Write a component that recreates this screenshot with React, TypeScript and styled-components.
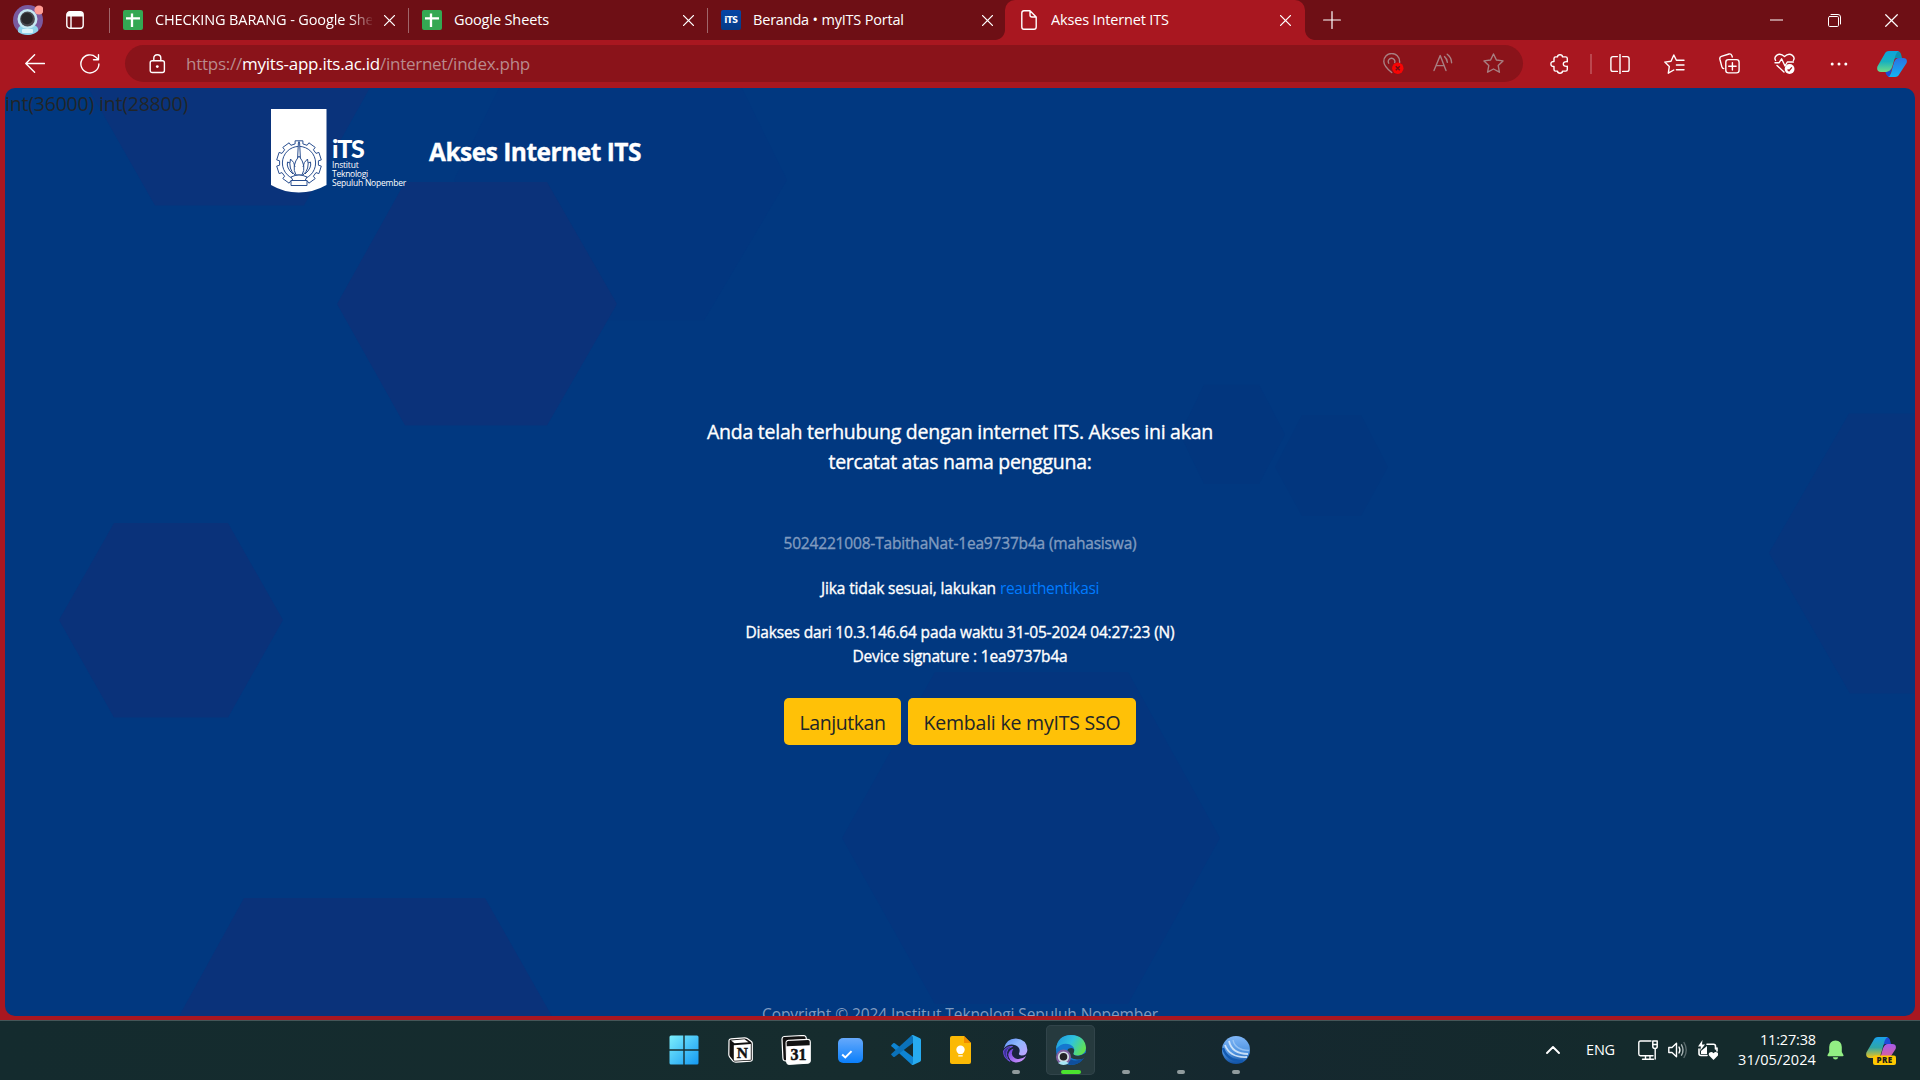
import React from "react";
import styled, { createGlobalStyle, css } from "styled-components";

const Global = createGlobalStyle`
  *, *::before, *::after { box-sizing: border-box; }
  html, body { margin: 0; padding: 0; background: #a91720; overflow: hidden; }
  body { font-family: "Open Sans", "Noto Sans", sans-serif; }
  svg { display: block; flex: none; }
`;

const Screen = styled.div`
  display: flex;
  flex-direction: column;
  width: 1920px;
  height: 1080px;
  background: #a91720;
  overflow: hidden;
`;

const Label = styled.span<{ $size?: number; $ls?: number; $color?: string; $weight?: number; $medium?: boolean }>`
  font-size: ${(p) => p.$size ?? 15}px;
  letter-spacing: ${(p) => p.$ls ?? 0}px;
  color: ${(p) => p.$color ?? "#fff"};
  font-weight: ${(p) => p.$weight ?? 400};
  white-space: nowrap;
  ${(p) => p.$medium && "-webkit-text-stroke: 0.35px currentColor;"}
`;

/* ---------- tab strip ---------- */
const TabStrip = styled.div`
  display: flex;
  height: 40px;
  flex: none;
  background: #6e0f15;
`;
const StripStart = styled.div`
  display: flex;
  align-items: center;
  gap: 23px;
  width: 109px;
  padding-left: 13px;
`;
const TabBox = styled.div<{ $active?: boolean }>`
  position: relative;
  display: flex;
  align-items: center;
  width: ${(p) => (p.$active ? 300 : 299)}px;
  height: 40px;
  padding: 0 ${(p) => (p.$active ? 14 : 13)}px 0 0;
  ${(p) =>
    p.$active
      ? css`
          margin-left: -1px;
          background: #a91720;
          border-radius: 10px 10px 0 0;
          &::before,
          &::after {
            content: "";
            position: absolute;
            bottom: 0;
            width: 10px;
            height: 10px;
          }
          &::before {
            left: -10px;
            background: radial-gradient(circle at 0 0, transparent 9.5px, #a91720 10.3px);
          }
          &::after {
            right: -10px;
            background: radial-gradient(circle at 100% 0, transparent 9.5px, #a91720 10.3px);
          }
        `
      : ""}
`;
const TabRule = styled.i<{ $hidden?: boolean }>`
  width: 1px;
  height: 25px;
  margin-right: 13px;
  background: ${(p) => (p.$hidden ? "transparent" : "#a0666a")};
`;
const TabTitle = styled.div<{ $fade?: boolean }>`
  flex: 1;
  height: 22px;
  line-height: 20px;
  margin: 0 12px;
  overflow: hidden;
  white-space: nowrap;
  ${(p) => p.$fade && "mask-image: linear-gradient(to right, #000 195px, transparent 219px);"}
`;
const NewTab = styled.div`
  display: flex;
  align-items: center;
  padding-left: 18px;
  flex: 1;
`;
const WindowButtons = styled.div`
  display: flex;
  align-items: center;
  gap: 44.5px;
  padding-right: 22px;
`;

/* ---------- toolbar ---------- */
const Toolbar = styled.div`
  display: flex;
  align-items: center;
  flex: none;
  height: 48px;
  padding: 0 12px 1px 25px;
`;
const NavButtons = styled.div`
  display: flex;
  gap: 35px;
  width: 100px;
`;
const AddressBar = styled.div`
  display: flex;
  align-items: center;
  width: 1398px;
  height: 37px;
  padding: 0 19px 0 24px;
  border-radius: 19px;
  background: #8a131a;
`;
const Url = styled.div`
  flex: 1;
  display: flex;
  align-items: center;
  line-height: 24px;
  margin-left: 20px;
`;
const AddressActions = styled.div`
  display: flex;
  gap: 29px;
`;
const ToolbarActions = styled.div`
  display: flex;
  align-items: center;
  flex: 1;
  gap: 34px;
  padding-left: 27px;
  & > svg:last-child {
    margin-left: -6px;
  }
`;
const ToolRule = styled.i`
  flex: none;
  width: 2px;
  height: 20px;
  margin: 0 -16px 0 -13px;
  background: #bb474e;
`;

/* ---------- page ---------- */
const Viewport = styled.main`
  position: relative;
  display: flex;
  flex-direction: column;
  flex: none;
  width: 1910px;
  height: 928px;
  margin: 0 5px 4px;
  border-radius: 10px;
  background: #013880;
  overflow: hidden;
`;
const Backdrop = styled.svg`
  position: absolute;
  inset: 0;
`;
const DebugLine = styled.div`
  position: relative;
  height: 21px;
  line-height: 32px;
`;
const SiteHeader = styled.header`
  position: relative;
  display: flex;
  height: 84px;
  padding-left: 266px;
`;
const LogoWords = styled.div`
  display: flex;
  flex-direction: column;
  width: 98px;
  padding: 25px 0 0 5px;
`;
const LogoMark = styled.div`
  height: 23px;
  line-height: 28px;
  font-family: Lato, sans-serif;
`;
const LogoLine = styled.div`
  height: 9px;
  line-height: 10px;
`;
const SiteTitle = styled.h1`
  margin: 20px 0 0 4px;
  line-height: 40px;
  font-weight: 700;
`;
const Content = styled.section`
  position: relative;
  display: flex;
  flex-direction: column;
  align-items: center;
  padding-top: 224px;
  text-align: center;
`;
const Lead = styled.p`
  display: flex;
  flex-direction: column;
  align-items: center;
  margin: 0 0 54px;
  line-height: 30px;
`;
const Para = styled.p<{ $gap: number }>`
  display: flex;
  flex-direction: column;
  align-items: center;
  margin: 0 0 ${(p) => p.$gap}px;
  line-height: 24px;
`;
const Inline = styled.span`
  display: flex;
  gap: 4px;
`;
const ButtonRow = styled.div`
  display: flex;
  gap: 7px;
`;
const Button = styled.button<{ $w: number }>`
  display: flex;
  align-items: center;
  justify-content: center;
  width: ${(p) => p.$w}px;
  height: 47px;
  padding: 2px 0 0;
  border: 0;
  border-radius: 5px;
  background: #ffc107;
  font-family: inherit;
`;
const Footer = styled.footer`
  position: relative;
  margin-top: 257px;
  line-height: 25px;
  text-align: center;
`;

/* ---------- taskbar ---------- */
const Taskbar = styled.footer`
  display: flex;
  flex: none;
  height: 60px;
  padding-left: 656px;
  border-top: 1px solid #465658;
  background: linear-gradient(to right, #142b2e, #162c2e 45%, #15282f 65%, #142a2c 85%, #142a2c);
`;
const Slot = styled.div<{ $active?: boolean }>`
  position: relative;
  display: flex;
  align-items: center;
  justify-content: center;
  width: 49px;
  height: 50px;
  margin: 4px 3px 0;
  border-radius: 5px;
  ${(p) => p.$active && "background: #263a3e; box-shadow: inset 0 0 0 1px #31444a;"}
  &:first-child {
    margin-right: 5px;
  }
`;
const Indicator = styled.i<{ $active?: boolean }>`
  position: absolute;
  bottom: 1px;
  left: 50%;
  transform: translateX(-50%);
  width: ${(p) => (p.$active ? 20 : 8)}px;
  height: 4px;
  border-radius: 2px;
  background: ${(p) => (p.$active ? "#4be32f" : "#909b9d")};
`;
const Tray = styled.div`
  display: flex;
  align-items: center;
  justify-content: flex-end;
  flex: 1;
  padding: 0 24px 2px 0;
`;
const TrayIcons = styled.div`
  display: flex;
  gap: 10px;
  margin: 0 20px 0 23px;
`;
const Language = styled.div`
  width: 29px;
  margin-left: 26px;
  line-height: 20px;
`;
const Clock = styled.div`
  display: flex;
  flex-direction: column;
  align-items: flex-end;
  width: 78px;
  margin-right: 11px;
  line-height: 20px;
`;
const PreviewButton = styled.div`
  margin-left: 22px;
`;

/* ---------- icons ---------- */
const stroke = { fill: "none", stroke: "#fff", strokeWidth: 1.4, strokeLinecap: "round", strokeLinejoin: "round" } as const;

const Astronaut = ({ size = 30 }: { size?: number }) => (
  <svg width={size} height={size} viewBox="0 0 30 30">
    <circle cx="15" cy="15" r="15" fill="#7a5a9f" />
    <path d="M5 27 Q4 21 10 20 H20 Q26 21 25 26 Q20 30 15 30 Q9 30 5 27Z" fill="#8fd3ea" />
    <circle cx="14.5" cy="14" r="10" fill="#c5e8f2" />
    <circle cx="14.5" cy="14" r="7.4" fill="#4a4a50" />
    <circle cx="14" cy="13.5" r="5.8" fill="#29292c" />
    <rect x="9" y="24" width="11" height="4" rx="1" fill="#d9f3fa" />
    <circle cx="26" cy="5" r="4.6" fill="#ff9c94" />
  </svg>
);
const TabActions = () => (
  <svg width="18" height="18" viewBox="0 0 18 18">
    <rect x="0.8" y="0.8" width="16.4" height="16.4" rx="3" {...stroke} />
    <path d="M1 3.5 Q1 1 3.5 1 H14.5 Q17 1 17 3.5 V5.5 H1Z" fill="#fff" />
    <path d="M5 5V17" {...stroke} />
  </svg>
);
const SheetsIcon = () => (
  <svg width="20" height="20" viewBox="0 0 20 20">
    <rect width="20" height="20" rx="2" fill="#34a853" />
    <path d="M9 3.5V17M3 8.3H17" fill="none" stroke="#fff" strokeWidth="2.3" />
  </svg>
);
const ItsFavicon = styled.div`
  width: 20px;
  height: 20px;
  border-radius: 2px;
  background: linear-gradient(#0746a6, #053a86);
  color: #fff;
  font: 800 10px/19px "Lato", sans-serif;
  text-align: center;
  letter-spacing: -0.4px;
`;
const FileIcon = () => (
  <svg width="20" height="20" viewBox="0 0 20 20">
    <path d="M4.5 .8H11L17.2 7V17Q17.2 19.2 15 19.2H4.9Q2.8 19.2 2.8 17V3Q2.8 .8 5 .8ZM11 .8V5Q11 7 13 7H17" {...stroke} />
  </svg>
);
const CloseX = ({ size = 11, w = 1.3 }: { size?: number; w?: number }) => (
  <svg width={size} height={size} viewBox="0 0 11 11">
    <path d="M.6 .6L10.4 10.4M10.4 .6L.6 10.4" {...stroke} strokeWidth={w} />
  </svg>
);
const PlusIcon = () => (
  <svg width="18" height="18" viewBox="0 0 18 18">
    <path d="M9 .6V17.4M.6 9H17.4" {...stroke} strokeWidth="1.2" />
  </svg>
);
const MinimizeIcon = () => (
  <svg width="13" height="13" viewBox="0 0 13 13">
    <path d="M0 6H13" stroke="#fff" strokeWidth="1" />
  </svg>
);
const RestoreIcon = () => (
  <svg width="13" height="13" viewBox="0 0 13 13">
    <rect x=".5" y="2.5" width="10" height="10" rx="1.2" {...stroke} strokeWidth="1" />
    <path d="M3 .5H10Q12.5 .5 12.5 3V10" {...stroke} strokeWidth="1" />
  </svg>
);
const BackIcon = () => (
  <svg width="20" height="20" viewBox="0 0 20 20">
    <path d="M19.4 9.500H.8M9.600 .8L.8 9.500L9.600 18.200" {...stroke} />
  </svg>
);
const RefreshIcon = () => (
  <svg width="20" height="20" viewBox="0 0 20 20">
    <path d="M18.9 10A9 9 0 1 1 15.9 3.2L18.4 5.6M18.5 .8V5.8H13.5" {...stroke} />
  </svg>
);
const LockIcon = () => (
  <svg width="17" height="20" viewBox="0 0 17 20">
    <rect x="1.2" y="6.7" width="14.2" height="11.8" rx="2" {...stroke} />
    <path d="M4.8 6.5V4.2Q4.8 .8 8.3 .8Q11.8 .8 11.8 4.2V6.5" {...stroke} />
    <circle cx="8.3" cy="12.6" r="1.4" fill="#fff" />
  </svg>
);
const dim = { ...stroke, stroke: "#a87f82" };
const LocationBlocked = () => (
  <svg width="21" height="21" viewBox="0 0 21 21">
    <path d="M8.700 19.500Q.8 13 .8 8.400A7.900 7.900 0 0 1 16.600 8.400V9.500M5.700 10.200A3.300 3.300 0 1 1 11.700 9.600" {...dim} />
    <circle cx="14.8" cy="15.3" r="5.7" fill="#f80404" />
    <path d="M12.8 13.3L16.8 17.3M16.8 13.3L12.8 17.3" stroke="#6d0f14" strokeWidth="1.4" />
  </svg>
);
const ReadAloud = () => (
  <svg width="21" height="20" viewBox="0 0 21 20">
    <path d="M1 17.500L7.200 2.600L13 17.500M3 12.600H11.200M11.500 3.600Q14 5.600 14.400 9.400M14.200 1.200Q18.500 4.400 18.600 9.800" {...dim} />
  </svg>
);
const starPath = "M10.5 1L13.4 7L20 7.9L15.2 12.5L16.4 19.2L10.5 16L4.6 19.2L5.8 12.5L1 7.9L7.6 7Z";
const StarIcon = () => (
  <svg width="21" height="20" viewBox="0 0 21 20">
    <path d={starPath} {...dim} />
  </svg>
);
const PuzzleIcon = () => (
  <svg width="19" height="20" viewBox="0 0 19 20">
    <path d="M5.600 2.900H7.500Q7.600 .8 10 .8Q12.400 .8 12.500 2.900H15.600Q17.300 2.900 17.300 4.600V7.700Q13.300 7.200 13.300 10Q13.300 12.800 17.300 12.300V15.400Q17.300 17.100 15.600 17.100H12.500Q12.400 19.200 10 19.200Q7.600 19.200 7.500 17.100H5.600Q4 17.100 4 15.400V12.500Q.9 12.600 .9 10Q.9 7.400 4 7.500V4.600Q4 2.900 5.600 2.900" {...stroke} />
  </svg>
);
const SplitIcon = () => (
  <svg width="20" height="20" viewBox="0 0 20 20">
    <path d="M7.4 2.6H3Q.9 2.6 .9 4.8V15.2Q.9 17.4 3 17.4H7.4M12.6 2.6H17Q19.1 2.6 19.1 4.8V15.2Q19.1 17.4 17 17.4H12.6M10 .5V19.5" {...stroke} />
  </svg>
);
const FavoritesIcon = () => (
  <svg width="21" height="20" viewBox="0 0 21 20">
    <path d="M9.800 16L4.300 19.200L5.300 12.600L.8 8.100L7 7.200L9.800 1L12.400 6.200H20M12.400 11H20M12.400 15.800H20" {...stroke} />
  </svg>
);
const CollectionsIcon = () => (
  <svg width="21" height="21" viewBox="0 0 21 21">
    <path d="M4.8 15.6Q3.3 15.6 2.9 13.9L.9 6.2Q.4 4 2.4 3.4L10 1Q12 .5 12.8 2.4L13.3 4" {...stroke} />
    <rect x="6.8" y="6.6" width="13.3" height="13.3" rx="2.6" {...stroke} />
    <path d="M13.4 9.6V17M9.7 13.3H17.1" {...stroke} />
  </svg>
);
const HeartPulse = () => (
  <svg width="21" height="21" viewBox="0 0 21 21">
    <path d="M1.6 7.500Q-.2 4.6 2.6 2.4Q6.4 -.4 10.5 3.6Q14.6 -.4 18.4 2.4Q21.2 4.6 19.4 7.500M3 12.4L10 19" {...stroke} />
    <path d="M1 9.800H5L7.6 5.800L11 13L13.3 9H19.4" {...stroke} />
    <circle cx="15.6" cy="16" r="4.9" fill="#fff" />
    <path d="M13.6 16.4L15 17.7L17.9 14.4" fill="none" stroke="#a91720" strokeWidth="1.3" />
  </svg>
);
const DotsIcon = () => (
  <svg width="20" height="20" viewBox="0 0 20 20">
    {[3.2, 10, 16.8].map((x) => (
      <circle key={x} cx={x} cy="10" r="1.5" fill="#fff" />
    ))}
  </svg>
);
const CopilotIcon = ({ pre }: { pre?: boolean }) => {
  const id = pre ? "p" : "t";
  return (
    <svg width="30" height="30" viewBox="0 0 30 30">
      <defs>
        <linearGradient id={id + "a"} x1="0" y1="0" x2="0" y2="1">
          <stop offset="0" stopColor={pre ? "#19a0ea" : "#0ea4dc"} />
          <stop offset=".5" stopColor={pre ? "#2fa6a8" : "#18b1bf"} />
          <stop offset="1" stopColor={pre ? "#f4c518" : "#6fdc86"} />
        </linearGradient>
        <linearGradient id={id + "b"} x1="0" y1="0" x2="0" y2="1">
          <stop offset="0" stopColor={pre ? "#a65bea" : "#2a72e4"} />
          <stop offset="1" stopColor={pre ? "#f0617c" : "#12b4f4"} />
        </linearGradient>
      </defs>
      <path d="M17 2H20Q23 2 24 5L25 9H20Q17 9 16 12L14 18Z" fill={pre ? "#1e4bd8" : "#0c8fb0"} />
      <path d="M7.6 5Q8.8 2 12 2H22Q19.5 3 18.6 6L15.2 18Q13.8 23 9.6 23H4Q-.8 23 .4 17.6Z" fill={`url(#${id}a)`} />
      <path d="M9 23Q13.6 22.6 15 18L12.6 28Q9.4 27.4 8.4 23Z" fill={pre ? "#f29a40" : "#1a4fd6"} />
      <path d="M22.4 25Q21.2 28 18 28H11Q13 27 14 24L16.8 14Q18.4 9 22 9H26Q31 9 29.6 14Z" fill={`url(#${id}b)`} />
      {pre && (
        <>
          <rect x="7" y="20.5" width="23" height="9.5" rx="2" fill="#ffc800" />
          <text x="18.5" y="28.2" textAnchor="middle" fontFamily="Open Sans" fontWeight="800" fontSize="8" letterSpacing=".3" fill="#1c1c1c">
            PRE
          </text>
        </>
      )}
    </svg>
  );
};

const gear = (() => {
  const pts: string[] = [];
  for (let i = 0; i < 10; i++) {
    const base = (i * 36 - 90) * (Math.PI / 180);
    [
      [-10, 22.5],
      [10, 22.5],
      [11.5, 19.5],
      [24.5, 19.5],
    ].forEach(([a, r]) => {
      const t = base + (a * Math.PI) / 180;
      pts.push(`${(28 + r * Math.cos(t)).toFixed(1)},${(54 + r * Math.sin(t)).toFixed(1)}`);
    });
  }
  return pts.join(" ");
})();
const Banner = () => (
  <svg width="56" height="84" viewBox="0 0 56 84">
    <path d="M0 0H55.5V76Q42 83.6 27.8 83.6Q13 83.6 0 76Z" fill="#fff" />
    <g fill="none" stroke="#2a4f90" strokeWidth="1">
      <polygon points={gear} strokeLinejoin="round" />
      <circle cx="28" cy="54" r="16.6" />
      <path d="M26.6 49L27.4 34Q28 31 28.6 34L29.4 49" fill="#fff" />
      <path d="M28 47Q20 57 25 66H31Q36 57 28 47Z" fill="#fff" />
      <path d="M24 66Q17 60 19.5 50Q23.5 53 24 58M32 66Q39 60 36.5 50Q32.5 53 32 58M22 65Q15 59 16.5 53L19 54M34 65Q41 59 39.5 53L37 54" />
      <path d="M20 68Q28 64 36 68L34 71.5H36V76.5H20V71.5H22Z" fill="#fff" />
      <path d="M21 71.5H35" />
    </g>
  </svg>
);

const WindowsIcon = () => (
  <svg width="30" height="30" viewBox="0 0 30 30">
    <defs>
      <linearGradient id="win" x1="0" y1="0" x2="1" y2="1">
        <stop offset="0" stopColor="#7ceffd" />
        <stop offset="1" stopColor="#1499f2" />
      </linearGradient>
    </defs>
    <path d="M2 .5H14.3V14.3H.5V2Q.5 .5 2 .5ZM15.7 .5H28Q29.5 .5 29.5 2V14.3H15.7ZM.5 15.7H14.3V29.5H2Q.5 29.5 .5 28ZM15.7 15.7H29.5V28Q29.5 29.5 28 29.5H15.7Z" fill="url(#win)" />
  </svg>
);
const NotionIcon = () => (
  <svg width="25" height="26" viewBox="0 0 25 26">
    <path d="M1 3.5Q1 2 3 1.8L16.5 .8Q18 .7 19.2 1.5L23.3 4.5Q24.3 5.3 24.3 6.5V22.5Q24.3 24 22.6 24.2L8 25.2Q6 25.3 5 24L1.6 19.8Q.8 18.8 .8 17.6Z" fill="#111" stroke="#fff" strokeWidth="1.2" />
    <path d="M5.8 8.2L22.8 7V22.7L7 23.7Q5.8 23.7 5.8 22.4Z" fill="#fff" />
    <path d="M3 3.4L16.5 2.3L20.5 5.2L6.5 6.2Z" fill="#fff" />
    <text x="14.3" y="20.5" textAnchor="middle" fontFamily="Liberation Serif" fontWeight="700" fontSize="15.5" fill="#111" stroke="#111" strokeWidth=".4">
      N
    </text>
  </svg>
);
const CalendarIcon = () => (
  <svg width="30" height="30" viewBox="0 0 30 30">
    <path d="M1 4Q1 1.8 3 1.5L22 .5Q24 .5 25 2L25.5 5L5 26L3 25.5Q2 25 1.9 23Z" fill="#111" stroke="#fff" strokeWidth="1.2" />
    <path d="M5 7.5Q5 5.5 7 5.3L27 4.3Q29.3 4.3 29.3 6.5V26Q29.3 28 27.3 28.2L8 29.4Q5.7 29.4 5.6 27.2Z" fill="#fff" stroke="#fff" />
    <path d="M5.6 7.5Q5.6 6 7.2 5.9L27 4.9Q28.7 4.9 28.7 6.5V10.2L5.7 11.2Z" fill="#111" />
    <text x="17.4" y="25.3" textAnchor="middle" fontFamily="Liberation Serif" fontWeight="700" fontSize="16" fill="#111" stroke="#111" strokeWidth=".5">
      31
    </text>
  </svg>
);
const TodoIcon = () => (
  <svg width="25" height="25" viewBox="0 0 24 25" preserveAspectRatio="none">
    <defs>
      <linearGradient id="todo" x1="0" y1="0" x2="0" y2="1">
        <stop offset="0" stopColor="#66a9fb" />
        <stop offset="1" stopColor="#0a7ffb" />
      </linearGradient>
    </defs>
    <rect width="24" height="25" rx="5" fill="url(#todo)" />
    <path d="M4 16.5L7 19.5L13 13.2" fill="none" stroke="#fff" strokeWidth="1.9" />
  </svg>
);
const CodeIcon = () => (
  <svg width="30" height="30" viewBox="0 0 30 30">
    <path d="M22 22L3.8 8.3Q3 7.7 2.2 8.3L.5 9.9Q-.2 10.6 .5 11.3L20.5 29.5L22 30Z" fill="#0e84d2" />
    <path d="M22 8L3.8 21.7Q3 22.3 2.2 21.7L.5 20.1Q-.2 19.4 .5 18.7L20.5 .5L22 0Z" fill="#0b72ba" />
    <path d="M20.500 .6L22 0L29 3.3Q30 3.8 30 5V25Q30 26.2 29 26.7L22 30L20.500 29.400Q22 29 22 27.500V2.500Q22 1 20.500 .6Z" fill="#27abf0" />
  </svg>
);
const KeepIcon = () => (
  <svg width="21" height="28" viewBox="0 0 21 28">
    <path d="M2 0H14L21 7V26Q21 28 19 28H2Q0 28 0 26V2Q0 0 2 0Z" fill="#fbb905" />
    <path d="M14 0L21 7H14Z" fill="#f08c00" />
    <circle cx="10.5" cy="13.7" r="4.2" fill="#fff" />
    <path d="M8.3 16H12.7V17.800H8.3ZM8.3 19.3H12.7V20.6H8.3Z" fill="#fff" />
  </svg>
);
const SwirlIcon = () => (
  <svg width="25" height="25" viewBox="0 0 25 25">
    <defs>
      <linearGradient id="swa" x1="0" y1="0" x2="1" y2=".8">
        <stop offset="0" stopColor="#5b8cf5" />
        <stop offset=".5" stopColor="#8fb8ff" />
        <stop offset="1" stopColor="#b9a4ff" />
      </linearGradient>
      <linearGradient id="swb" x1="0" y1="0" x2="1" y2="1">
        <stop offset="0" stopColor="#6a3be0" />
        <stop offset="1" stopColor="#d9a0ff" />
      </linearGradient>
    </defs>
    <circle cx="12.5" cy="12.5" r="12.1" fill="#1a2440" />
    <path d="M.8 10.500Q3.500 .6 12.500 .5Q24 1 24.400 12Q24 17.500 18.500 17.500Q15 17.300 16.200 15Q18 9.500 12.500 7.200Q5.500 5 .8 10.500Z" fill="url(#swa)" />
    <path d="M10.500 10.800Q6.500 17 12 20.300Q17.500 22.500 23.200 18Q19.500 24.800 12.500 24.500Q5.500 23 5.200 16.500Q6 12 10.500 10.800Z" fill="url(#swb)" />
    <path d="M9.500 8.500Q2.800 10.500 3.600 17.500Q4.200 21 7 23.400Q.3 20 .5 13Q3.500 8 9.500 8.500Z" fill="#3b2f9c" stroke="#7a55ee" strokeWidth=".8" />
  </svg>
);
const EdgeIcon = () => (
  <svg width="30" height="30" viewBox="0 0 30 30">
    <defs>
      <linearGradient id="eda" x1="0" y1=".2" x2="1" y2=".6">
        <stop offset="0" stopColor="#1f9be0" />
        <stop offset=".5" stopColor="#2fc3dc" />
        <stop offset="1" stopColor="#63e34c" />
      </linearGradient>
    </defs>
    <circle cx="15" cy="15" r="15" fill="#1576cf" />
    <path d="M11 15Q10 21 15 24.5Q21 27.5 28.5 22Q24 30 15 30Q8 29 7.5 21Q8 16 11 15Z" fill="#0f4f9c" />
    <path d="M12 14Q17 11.5 18.3 15Q18.6 16.5 17.5 18.5Q17.5 20.5 22 20.7Q26 20.5 31 17L29.500 22Q26 25 21 24.5Q12 24 11 17Z" fill="#263a3e" />
    <path d="M0 14Q1.5 0 15 0Q29 .5 30 13Q29.5 20 22 20.5Q16 20.5 18 17Q19.5 12 14 9.5Q6 7 0 14Z" fill="url(#eda)" />
    <g transform="translate(0 14)">
      <circle cx="7.5" cy="8" r="7.5" fill="#7f61a1" />
      <circle cx="7.5" cy="8" r="5.6" fill="#d4dfe6" />
      <path d="M2 14Q7.5 10.5 13 14Q7.5 18 2 14Z" fill="#a8e6f4" />
      <circle cx="7.5" cy="7.8" r="3.8" fill="#232325" />
    </g>
  </svg>
);
const SphereIcon = () => (
  <svg width="28" height="28" viewBox="0 0 28 28">
    <defs>
      <linearGradient id="sph" x1="0" y1="0" x2="0" y2="1">
        <stop offset="0" stopColor="#7fb6f7" />
        <stop offset=".6" stopColor="#4d92e0" />
        <stop offset="1" stopColor="#0f4fa0" />
      </linearGradient>
    </defs>
    <circle cx="14" cy="14" r="14" fill="url(#sph)" />
    <path d="M3 9Q8 22 25 21M7 5Q10 18 26 18" fill="none" stroke="#dcecfb" strokeWidth="1.8" opacity=".85" />
    <path d="M11 4Q13 14 27 14.500" fill="none" stroke="#b9d8fa" strokeWidth="1.300" opacity=".6" />
    <path d="M1 12Q5 25 21 25" fill="none" stroke="#135ab0" strokeWidth="2.5" />
  </svg>
);

const ChevronUp = () => (
  <svg width="14" height="8" viewBox="0 0 14 8">
    <path d="M1 7L7 1L13 7" {...stroke} strokeWidth="1.9" />
  </svg>
);
const NetworkIcon = () => (
  <svg width="20" height="20" viewBox="0 0 20 20">
    <path d="M13 1H2.5Q.8 1 .8 2.7V14Q.8 15.7 2.5 15.7H15M7.5 16V19M12 16V19M4.5 19.2H15.5M17.2 9V19" {...stroke} />
    <path d="M14.8 1H19.2V6.5Q19.2 8.5 17 8.5Q14.8 8.5 14.8 6.5ZM14.8 4.5H19.2" {...stroke} strokeWidth="1.5" />
  </svg>
);
const SpeakerIcon = () => (
  <svg width="20" height="20" viewBox="0 0 20 20">
    <path d="M.8 7.5H4L8.5 3.3V16.7L4 12.5H.8Z" {...stroke} />
    <path d="M11 7Q12.8 10 11 13" {...stroke} />
    <path d="M13.5 4.8Q16.5 10 13.5 15.2" {...stroke} stroke="#a9b4b5" />
    <path d="M16 2.5Q20.5 10 16 17.5" {...stroke} stroke="#5a6a6c" />
  </svg>
);
const BatteryIcon = () => (
  <svg width="20" height="20" viewBox="0 0 20 20">
    <path d="M9 4.2H15.5Q17.5 4.2 17.5 6.2V9M1 9V13.5Q1 15.5 3 15.5H9M19 8V11" {...stroke} strokeWidth="1.6" />
    <path d="M3 14V11L9 6V14Z" fill="#fff" />
    <path d="M4.5 0L0 6.5H3L2 11L7 4.5H4Z" fill="#fff" />
    <path d="M15.5 20L11.3 15.7Q10 13.8 11.7 12.5Q13.8 11.4 15.5 13.3Q17.2 11.4 19.3 12.5Q21 13.8 19.7 15.7Z" fill="#fff" />
  </svg>
);
const BellIcon = () => (
  <svg width="17" height="20" viewBox="0 0 17 20">
    <path d="M8.5 .5Q14.5 .8 14.8 7V12L16.6 15.3Q16.6 16.2 15.6 16.2H1.4Q.4 16.2 .4 15.3L2.2 12V7Q2.5 .8 8.5 .5Z" fill="#92ee84" />
    <path d="M5.8 17.3H11.2Q10.8 19.5 8.5 19.5Q6.2 19.5 5.8 17.3Z" fill="#92ee84" />
  </svg>
);

/* ---------- data ---------- */
const tabs = [
  { icon: <SheetsIcon />, title: "CHECKING BARANG - Google Sheets", ls: -0.12, fade: true },
  { icon: <SheetsIcon />, title: "Google Sheets", ls: -0.126 },
  { icon: <ItsFavicon>iTS</ItsFavicon>, title: "Beranda • myITS Portal", ls: -0.19 },
  { icon: <FileIcon />, title: "Akses Internet ITS", ls: -0.16, active: true },
];

const hexes: [string, string][] = [
  ["454,180 501,84 740,84 787,180 704,320.5 534,320.5", "#02367f"],
  ["86,84 372,84 304,205.5 155,205.5", "#0a337b"],
  ["337,304 405,182 547,182 617,304 547,425.5 405,425.5", "#0b327a"],
  ["59,620 114,523 228,523 283,620 228,717.5 114,717.5", "#0a327a"],
  ["178,1018 244,898 485,898 553,1018", "#0a327a"],
  ["1180,434.5 1204,384.5 1259,384.5 1285,434.5 1259,484 1204,484", "#02367e"],
  ["1275,467 1302,415 1361,415 1388,467 1361,516 1302,516", "#02367e"],
  ["842,838 935,672 1128,672 1220,838 1128,1004 935,1004", "#04357e"],
  ["1769,553 1849,413.5 1920,413.5 1920,693.5 1850,693.5", "#06357d"],
];

const apps: { icon: React.ReactNode; run?: boolean; active?: boolean }[] = [
  { icon: <WindowsIcon /> },
  { icon: <NotionIcon /> },
  { icon: <CalendarIcon /> },
  { icon: <TodoIcon /> },
  { icon: <CodeIcon /> },
  { icon: <KeepIcon /> },
  { icon: <SwirlIcon />, run: true },
  { icon: <EdgeIcon />, run: true, active: true },
  { icon: null, run: true },
  { icon: null, run: true },
  { icon: <SphereIcon />, run: true },
];

export default function App() {
  return (
    <Screen>
      <Global />
      <TabStrip>
        <StripStart>
          <Astronaut />
          <TabActions />
        </StripStart>
        {tabs.map((t) => (
          <TabBox key={t.title} $active={t.active}>
            <TabRule $hidden={t.active} />
            {t.icon}
            <TabTitle $fade={t.fade}>
              <Label $size={14.5} $ls={t.ls}>{t.title}</Label>
            </TabTitle>
            <CloseX />
          </TabBox>
        ))}
        <NewTab>
          <PlusIcon />
        </NewTab>
        <WindowButtons>
          <MinimizeIcon />
          <RestoreIcon />
          <CloseX size={13} w={1} />
        </WindowButtons>
      </TabStrip>

      <Toolbar>
        <NavButtons>
          <BackIcon />
          <RefreshIcon />
        </NavButtons>
        <AddressBar>
          <LockIcon />
          <Url>
            <Label $size={17} $ls={-0.248} $color="#b98a8d">https://</Label>
            <Label $size={17} $ls={-0.24}>myits-app.its.ac.id</Label>
            <Label $size={17} $ls={-0.265} $color="#b98a8d">/internet/index.php</Label>
          </Url>
          <AddressActions>
            <LocationBlocked />
            <ReadAloud />
            <StarIcon />
          </AddressActions>
        </AddressBar>
        <ToolbarActions>
          <PuzzleIcon />
          <ToolRule />
          <SplitIcon />
          <FavoritesIcon />
          <CollectionsIcon />
          <HeartPulse />
          <DotsIcon />
          <CopilotIcon />
        </ToolbarActions>
      </Toolbar>

      <Viewport>
        <Backdrop width="1910" height="928" viewBox="5 88 1910 928">
          {hexes.map(([points, fill]) => (
            <polygon key={points} points={points} fill={fill} />
          ))}
        </Backdrop>
        <DebugLine>
          <Label $size={19.5} $ls={-0.202} $color="#212529">int(36000) int(28800)</Label>
        </DebugLine>
        <SiteHeader>
          <Banner />
          <LogoWords>
            <LogoMark>
              <Label $size={25} $ls={-1.25} $weight={900}>iTS</Label>
            </LogoMark>
            <LogoLine><Label $size={8.5} $ls={-0.2}>Institut</Label></LogoLine>
            <LogoLine><Label $size={8.5} $ls={-0.253}>Teknologi</Label></LogoLine>
            <LogoLine><Label $size={8.5} $ls={-0.215}>Sepuluh Nopember</Label></LogoLine>
          </LogoWords>
          <SiteTitle>
            <Label $size={24.5} $ls={-0.507} $weight={700} $medium>Akses Internet ITS</Label>
          </SiteTitle>
        </SiteHeader>
        <Content>
          <Lead>
            <Label $size={19.5} $ls={-0.251} $medium>Anda telah terhubung dengan internet ITS. Akses ini akan</Label>
            <Label $size={19.5} $ls={-0.302} $medium>tercatat atas nama pengguna:</Label>
          </Lead>
          <Para $gap={21}>
            <Label $size={15.5} $ls={-0.176} $color="#809bbf" $medium>5024221008-TabithaNat-1ea9737b4a (mahasiswa)</Label>
          </Para>
          <Para $gap={20}>
            <Inline>
              <Label $size={15.5} $ls={-0.136} $medium>Jika tidak sesuai, lakukan</Label>
              <Label $size={15.5} $ls={-0.35} $color="#007bff">reauthentikasi</Label>
            </Inline>
          </Para>
          <Para $gap={30}>
            <Label $size={15.5} $ls={-0.153} $medium>Diakses dari 10.3.146.64 pada waktu 31-05-2024 04:27:23 (N)</Label>
            <Label $size={15.5} $ls={-0.186} $medium>Device signature : 1ea9737b4a</Label>
          </Para>
          <ButtonRow>
            <Button $w={117}><Label $size={19.5} $ls={-0.429} $color="#212529">Lanjutkan</Label></Button>
            <Button $w={228}><Label $size={19.5} $ls={-0.21} $color="#212529">Kembali ke myITS SSO</Label></Button>
          </ButtonRow>
        </Content>
        <Footer>
          <Label $size={15.5} $ls={-0.09} $color="#809bbf">Copyright © 2024 Institut Teknologi Sepuluh Nopember</Label>
        </Footer>
      </Viewport>

      <Taskbar>
        {apps.map((a, i) => (
          <Slot key={i} $active={a.active}>
            {a.icon}
            {a.run && <Indicator $active={a.active} />}
          </Slot>
        ))}
        <Tray>
          <ChevronUp />
          <Language><Label $size={14.5} $ls={-0.177}>ENG</Label></Language>
          <TrayIcons>
            <NetworkIcon />
            <SpeakerIcon />
            <BatteryIcon />
          </TrayIcons>
          <Clock>
            <Label $size={14.5} $ls={-0.172}>11:27:38</Label>
            <Label $size={14.5} $ls={0.103}>31/05/2024</Label>
          </Clock>
          <BellIcon />
          <PreviewButton>
            <CopilotIcon pre />
          </PreviewButton>
        </Tray>
      </Taskbar>
    </Screen>
  );
}
